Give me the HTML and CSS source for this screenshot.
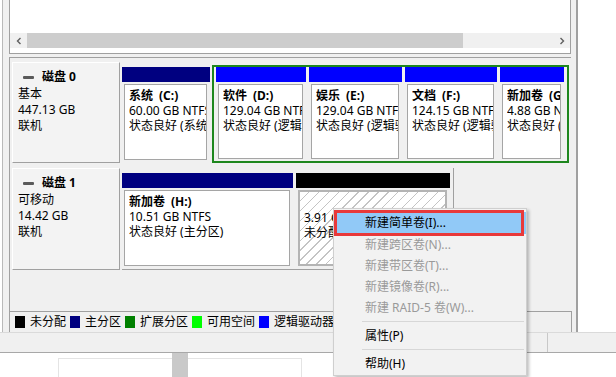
FILE: index.html
```html
<!DOCTYPE html>
<html lang="zh-CN">
<head>
    <meta charset="UTF-8">
    <title>磁盘管理</title>
    <link rel="stylesheet" href="styles.css">
</head>
<body>
<div class="screen">
    <div class="window">
        <!-- 卷列表 (只看到底部滚动条) -->
        <div class="listview">
            <div class="scrollbar">
                <span class="sb-btn">
                    <svg width="8" height="8" viewBox="0 0 8 8"><path d="M5.5 1 L2.5 4 L5.5 7" fill="none" stroke="#606060" stroke-width="1.4"/></svg>
                </span>
                <div class="sb-track"><div class="sb-thumb"></div></div>
                <span class="sb-btn">
                    <svg width="8" height="8" viewBox="0 0 8 8"><path d="M2.5 1 L5.5 4 L2.5 7" fill="none" stroke="#606060" stroke-width="1.4"/></svg>
                </span>
            </div>
        </div>

        <!-- 图形视图 -->
        <div class="diskview">
            <div class="disk-row row0">
                <div class="disk-label">
                    <div class="disk-name"><span class="disk-icon"></span>磁盘 0</div>
                    <div>基本</div>
                    <div>447.13 GB</div>
                    <div>联机</div>
                </div>
                <div class="parts">
                    <div class="part primary w-c">
                        <div class="part-bar"></div>
                        <div class="part-body">
                            <b>系统&ensp;(C:)</b>
                            <span>60.00 GB NTFS</span>
                            <span>状态良好 (系统, 启动, 页面文件, 活动, 主分区)</span>
                        </div>
                    </div>
                    <div class="extended">
                        <div class="part logical w-d">
                            <div class="part-bar"></div>
                            <div class="part-body">
                                <b>软件&ensp;(D:)</b>
                                <span>129.04 GB NTFS</span>
                                <span>状态良好 (逻辑驱动器)</span>
                            </div>
                        </div>
                        <div class="part logical w-e">
                            <div class="part-bar"></div>
                            <div class="part-body">
                                <b>娱乐&ensp;(E:)</b>
                                <span>129.04 GB NTFS</span>
                                <span>状态良好 (逻辑驱动器)</span>
                            </div>
                        </div>
                        <div class="part logical w-f">
                            <div class="part-bar"></div>
                            <div class="part-body">
                                <b>文档&ensp;(F:)</b>
                                <span>124.15 GB NTFS</span>
                                <span>状态良好 (逻辑驱动器)</span>
                            </div>
                        </div>
                        <div class="part logical w-g">
                            <div class="part-bar"></div>
                            <div class="part-body">
                                <b>新加卷&ensp;(G:)</b>
                                <span>4.88 GB NTFS</span>
                                <span>状态良好 (逻辑驱动器)</span>
                            </div>
                        </div>
                    </div>
                </div>
            </div>

            <div class="disk-row row1">
                <div class="disk-label">
                    <div class="disk-name"><span class="disk-icon"></span>磁盘 1</div>
                    <div>可移动</div>
                    <div>14.42 GB</div>
                    <div>联机</div>
                </div>
                <div class="parts framed">
                    <div class="part primary w-h">
                        <div class="part-bar"></div>
                        <div class="part-body">
                            <b>新加卷&ensp;(H:)</b>
                            <span>10.51 GB NTFS</span>
                            <span>状态良好 (主分区)</span>
                        </div>
                    </div>
                    <div class="part unalloc w-u">
                        <div class="part-bar"></div>
                        <div class="part-body">
                            <b>&nbsp;</b>
                            <span>3.91 GB</span>
                            <span>未分配</span>
                        </div>
                    </div>
                </div>
            </div>

            <div class="legend">
                <span class="key"><i class="sw sw-unalloc"></i>未分配</span>
                <span class="key"><i class="sw sw-primary"></i>主分区</span>
                <span class="key"><i class="sw sw-extended"></i>扩展分区</span>
                <span class="key"><i class="sw sw-free"></i>可用空间</span>
                <span class="key"><i class="sw sw-logical"></i>逻辑驱动器</span>
            </div>
        </div>
    </div>

    <div class="statusbar">
        <div class="status-main"></div>
        <div class="status-side"></div>
    </div>

    <div class="below">
        <div class="pane pane-left"></div>
        <div class="strip"></div>
        <div class="pane pane-right"></div>
    </div>

    <!-- 右键菜单 -->
    <div class="context-menu">
        <div class="menu-item active">新建简单卷(I)...</div>
        <div class="menu-item disabled">新建跨区卷(N)...</div>
        <div class="menu-item disabled">新建带区卷(T)...</div>
        <div class="menu-item disabled">新建镜像卷(R)...</div>
        <div class="menu-item disabled">新建 RAID-5 卷(W)...</div>
        <div class="menu-sep"></div>
        <div class="menu-item">属性(P)</div>
        <div class="menu-sep"></div>
        <div class="menu-item">帮助(H)</div>
    </div>
</div>
</body>
</html>
```

FILE: styles.css
```css
* {
    box-sizing: border-box;
}
body {
    margin: 0;
    background-color: #fff;
    font-family: "Noto Sans", "Noto Sans CJK SC", sans-serif;
    font-size: 12px;
    color: #000;
}
.screen {
    position: relative;
    width: 616px;
    height: 377px;
    overflow: hidden;
}
.window {
    display: flex;
    flex-direction: column;
    width: 576px;
    height: 332px;
    margin-left: 2px;
    padding: 0 5px 0 6px;
    background-color: #f0f0f0;
    border-left: 1px solid #b9b9b9;
    border-right: 2px solid #a0a0a0;
}

/* 列表视图 */
.listview {
    height: 54px;
    padding-top: 33px;
    background-color: #fff;
    border: 1px solid #a0a0a0;
    border-top: none;
}
.scrollbar {
    display: flex;
    height: 15px;
    background-color: #f0f0f0;
}
.sb-btn {
    display: flex;
    align-items: center;
    justify-content: center;
    width: 17px;
}
.sb-track {
    flex: 1;
}
.sb-thumb {
    width: 436px;
    height: 100%;
    background-color: #cdcdcd;
}

/* 图形视图 */
.diskview {
    flex: 1;
    display: flex;
    flex-direction: column;
    margin-top: 3px;
    padding-top: 4px;
    border-top: 1px solid #a0a0a0;
    border-left: 1px solid #a0a0a0;
}
.disk-row {
    display: flex;
    padding-left: 2px;
}
.row0 {
    height: 101px;
}
.row1 {
    height: 102px;
    margin-top: 5px;
}
.disk-label {
    width: 108px;
    padding: 6px 0 0 5px;
    line-height: 16px;
    background-color: #f3f3f3;
    border: 1px solid #fff;
    border-right-color: #a0a0a0;
    border-bottom-color: #a0a0a0;
}
.disk-name {
    display: flex;
    align-items: center;
    margin-bottom: 1px;
    font-weight: bold;
}
.disk-icon {
    width: 11px;
    height: 3px;
    margin: 0 8px 0 5px;
    background-color: #5a5a5a;
    border-radius: 1px;
}
.parts {
    display: flex;
    gap: 2px;
    margin-left: 2px;
    padding-top: 3px;
}
.parts.framed {
    gap: 3px;
    padding: 5px 3px 0 0;
    border-right: 1px solid #a0a0a0;
    border-bottom: 1px solid #a0a0a0;
}
.part {
    display: flex;
    flex-direction: column;
}
.row0 .primary {
    padding-top: 2px;
}
.part-bar {
    height: 15px;
    flex-shrink: 0;
}
.primary .part-bar {
    background-color: #000080;
}
.logical .part-bar {
    background-color: #0000ff;
}
.unalloc .part-bar {
    background-color: #000;
}
.part-body {
    flex: 1;
    display: flex;
    flex-direction: column;
    margin: 2px 3px 3px 2px;
    padding: 3px 0 0 4px;
    line-height: 15px;
    white-space: nowrap;
    overflow: hidden;
    background-color: #fff;
    border: 1px solid #a5a5a5;
}
.part-body > * {
    overflow: hidden;
}
.unalloc .part-body {
    background: repeating-linear-gradient(135deg, #fff 0, #fff 6px, #c4c4c4 6px, #c4c4c4 7px);
    border: 2px solid #b4b4b4;
}
.extended {
    display: flex;
    gap: 3px;
    height: 98px;
    padding: 0 3px 0 2px;
    border: 2px solid #1e871e;
}
.extended .part-body {
    margin-bottom: 2px;
}
.w-c { width: 88px; }
.w-d { width: 90px; }
.w-e { width: 93px; }
.w-f { width: 92px; }
.w-g { width: 64px; }
.w-h { width: 171px; }
.w-u { width: 154px; }

/* 图例 */
.legend {
    display: flex;
    align-items: center;
    height: 21px;
    margin-top: auto;
    margin-right: -1px;
    padding-left: 5px;
    line-height: 14px;
    border-top: 1px solid #a0a0a0;
    border-right: 1px solid #a0a0a0;
}
.key {
    display: flex;
    align-items: center;
    margin-right: 4px;
}
.sw {
    width: 10px;
    height: 12px;
    margin-right: 5px;
}
.sw-unalloc { background-color: #000; }
.sw-primary { background-color: #000080; }
.sw-extended { background-color: #008000; }
.sw-free { background-color: #00ff00; }
.sw-logical { background-color: #0000ff; }

/* 状态栏 */
.statusbar {
    display: flex;
    height: 21px;
    background-color: #f0f0f0;
    border-top: 1px solid #dadada;
    border-bottom: 1px solid #a8a8a8;
}
.status-main {
    width: 547px;
}
.status-side {
    flex: 1;
    border-left: 1px solid #c8c8c8;
}

.below {
    display: flex;
    height: 24px;
    padding-left: 58px;
}
.pane {
    width: 114px;
    margin-top: 5px;
    border-top: 1px solid #e4e4e4;
}
.pane-left {
    border-left: 1px solid #e4e4e4;
}
.pane-right {
    border-right: 1px solid #e4e4e4;
}
.strip {
    width: 16px;
    background-color: #c9c9c9;
}

/* 右键菜单 */
.context-menu {
    position: absolute;
    left: 333px;
    top: 208px;
    width: 194px;
    height: 168px;
    padding-top: 3px;
    background-color: #f2f2f2;
    border: 1px solid #cfcfcf;
    box-shadow: 2px 2px 3px rgba(0, 0, 0, 0.25);
}
.menu-item {
    position: relative;
    height: 21px;
    padding-left: 31px;
    line-height: 21px;
}
.menu-item.disabled {
    color: #9a9a9a;
}
.menu-item.active {
    height: 22px;
    line-height: 22px;
    background-color: #91c9f7;
}
.menu-item.active::after {
    content: "";
    position: absolute;
    left: 0;
    right: 2px;
    top: -2px;
    bottom: -2px;
    border: 3px solid #e8393a;
}
.menu-sep {
    height: 7px;
    margin: 0 2px 0 28px;
    border-bottom: 1px solid #d7d7d7;
    transform: translateY(-3px);
}
```
